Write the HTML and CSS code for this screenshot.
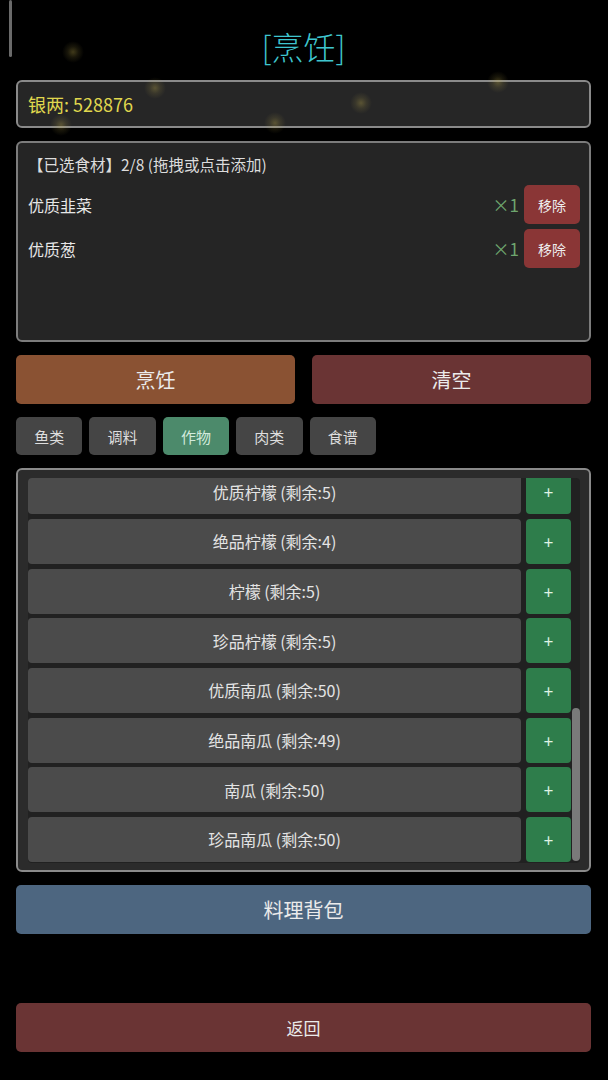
FILE: index.html
```html
<!DOCTYPE html>
<html lang="zh-CN">
<head>
<meta charset="utf-8">
<title>烹饪</title>
<link rel="stylesheet" href="styles.css">
</head>
<body>
<div class="page">
  <div class="page-scroll"></div>
  <div class="glow g1"></div>
  <div class="glow g2"></div>
  <div class="glow g3"></div>
  <div class="glow g4"></div>
  <div class="glow g5"></div>
  <div class="glow g6"></div>

  <h1 class="title">[烹饪]</h1>

  <div class="panel silver">银两: 528876</div>

  <div class="panel selected">
    <div class="sel-title">【已选食材】2/8 (拖拽或点击添加)</div>
    <div class="sel-row">
      <span class="sel-name">优质韭菜</span>
      <span class="sel-qty">×1</span>
      <button class="btn-remove">移除</button>
    </div>
    <div class="sel-row">
      <span class="sel-name">优质葱</span>
      <span class="sel-qty">×1</span>
      <button class="btn-remove">移除</button>
    </div>
  </div>

  <div class="actions">
    <button class="btn btn-cook">烹饪</button>
    <button class="btn btn-clear">清空</button>
  </div>

  <div class="tabs">
    <button class="tab">鱼类</button>
    <button class="tab">调料</button>
    <button class="tab active">作物</button>
    <button class="tab">肉类</button>
    <button class="tab">食谱</button>
  </div>

  <div class="panel list">
    <div class="viewport">
      <div class="rows">
        <div class="item-row"><div class="item">优质柠檬 (剩余:5)</div><button class="plus">+</button></div>
        <div class="item-row"><div class="item">绝品柠檬 (剩余:4)</div><button class="plus">+</button></div>
        <div class="item-row"><div class="item">柠檬 (剩余:5)</div><button class="plus">+</button></div>
        <div class="item-row"><div class="item">珍品柠檬 (剩余:5)</div><button class="plus">+</button></div>
        <div class="item-row"><div class="item">优质南瓜 (剩余:50)</div><button class="plus">+</button></div>
        <div class="item-row"><div class="item">绝品南瓜 (剩余:49)</div><button class="plus">+</button></div>
        <div class="item-row"><div class="item">南瓜 (剩余:50)</div><button class="plus">+</button></div>
        <div class="item-row"><div class="item">珍品南瓜 (剩余:50)</div><button class="plus">+</button></div>
      </div>
      <div class="track"><div class="thumb"></div></div>
    </div>
  </div>

  <button class="btn btn-bag">料理背包</button>
  <button class="btn btn-back">返回</button>
</div>
</body>
</html>
```

FILE: styles.css
```css
* { box-sizing: border-box; }

html, body {
  margin: 0;
  padding: 0;
  background: #000;
}

body {
  font-family: "Noto Sans CJK SC", "Noto Sans", sans-serif;
  color: #e2e2e2;
  width: 608px;
  height: 1080px;
  overflow: hidden;
}

.page {
  position: relative;
  display: flex;
  flex-direction: column;
  gap: 13px;
  padding: 26px 17px 0 16px;
}

.page-scroll {
  position: absolute;
  left: 9px;
  top: 0;
  width: 3px;
  height: 57px;
  border-radius: 2px;
  background: #6a6a6a;
}

.glow {
  position: absolute;
  width: 22px;
  height: 22px;
  border-radius: 50%;
  background: radial-gradient(circle, rgba(200, 180, 80, 0.32) 0%, rgba(200, 180, 80, 0.12) 35%, rgba(200, 180, 80, 0) 70%);
  pointer-events: none;
  z-index: 2;
}
.g1 { left: 62px; top: 41px; }
.g2 { left: 144px; top: 77px; }
.g3 { left: 264px; top: 112px; }
.g4 { left: 350px; top: 92px; }
.g5 { left: 487px; top: 71px; }
.g6 { left: 50px; top: 114px; }

.title {
  margin: 0;
  height: 41px;
  line-height: 41px;
  text-align: center;
  font-size: 32px;
  font-weight: 300;
  color: #3fc6cf;
}

.panel {
  border: 2px solid #8a8a8a;
  border-radius: 6px;
  background: #262626;
}

.silver {
  height: 48px;
  display: flex;
  align-items: center;
  padding: 0 10px;
  font-size: 18px;
  color: #e0d84e;
}

.selected {
  height: 201px;
  padding: 9px 9px 0 10px;
  border-color: #7c7c7c;
  background: #252525;
  display: flex;
  flex-direction: column;
  gap: 5px;
}

.sel-title {
  font-size: 15.5px;
  line-height: 24px;
  color: #dcdcdc;
  margin-bottom: 4px;
}

.sel-row {
  display: flex;
  align-items: center;
  height: 39px;
  gap: 5px;
}

.sel-name {
  flex: 1;
  font-size: 16px;
  color: #e6e6e6;
}

.sel-qty {
  font-size: 17px;
  color: #6ea56e;
}

.btn-remove {
  width: 56px;
  height: 39px;
  border: none;
  border-radius: 5px;
  background: #8a3636;
  color: #eee;
  font-family: inherit;
  font-size: 14px;
  padding: 0;
}

.btn {
  border: none;
  border-radius: 5px;
  height: 49px;
  font-family: inherit;
  font-size: 20px;
  color: #ebebeb;
  padding: 0;
}

.actions {
  display: flex;
  gap: 17px;
}
.actions .btn { flex: 1; }

.btn-cook { background: #8a5233; }
.btn-clear { background: #6a3434; }

.tabs {
  display: flex;
  gap: 7px;
}

.tab {
  width: 66.4px;
  height: 38px;
  border: none;
  border-radius: 5px;
  background: #454545;
  color: #dedede;
  font-family: inherit;
  font-size: 15px;
  padding: 0;
}
.tab.active {
  background: #4c8a6b;
  color: #d2eadc;
}

.list {
  padding: 8px 9px 7px 10px;
  background: #2b2b2b;
  border-color: #8a8a8a;
}

.viewport {
  height: 385px;
  overflow: hidden;
  display: flex;
  background: #212121;
  border-radius: 4px;
}

.rows {
  flex: 1;
  display: flex;
  flex-direction: column;
  gap: 4.67px;
  margin-top: -8.7px;
}

.item-row {
  display: flex;
  gap: 5px;
  height: 45px;
  flex-shrink: 0;
}

.item {
  flex: 1;
  border-radius: 4px;
  background: #4b4b4b;
  display: flex;
  align-items: center;
  justify-content: center;
  font-size: 16px;
  color: #e4e4e4;
}

.plus {
  width: 45px;
  height: 45px;
  border: none;
  border-radius: 4px;
  background: #2e7d4b;
  color: #dff3e3;
  font-family: inherit;
  font-size: 17px;
  padding: 0;
}

.track {
  width: 9px;
  flex-shrink: 0;
}

.thumb {
  margin-top: 230px;
  margin-left: 1px;
  width: 8px;
  height: 153px;
  border-radius: 4px;
  background: #7a7a7a;
}

.btn-bag {
  background: #4d6680;
  width: 575px;
}

.btn-back {
  background: #6a3434;
  width: 575px;
  margin-top: 56px;
  font-size: 17px;
}
```
